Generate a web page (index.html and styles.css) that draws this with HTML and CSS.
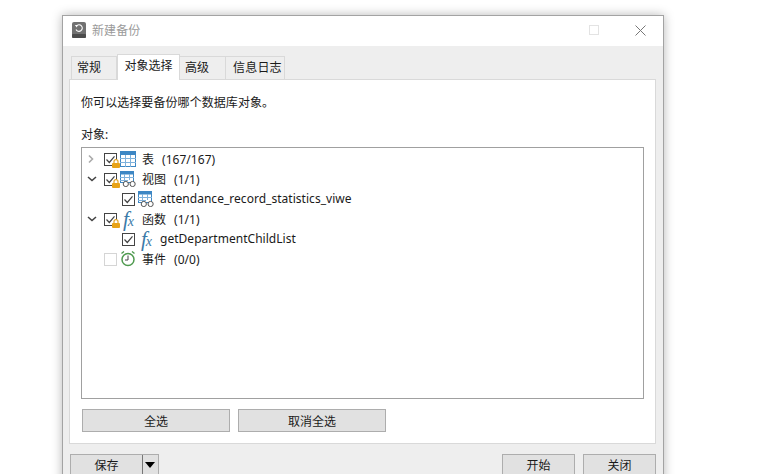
FILE: index.html
```html
<!DOCTYPE html>
<html lang="zh-CN">
<head>
    <meta charset="UTF-8">
    <title>新建备份</title>
    <link rel="stylesheet" href="styles.css">
</head>
<body>
    <svg class="defs" width="0" height="0">
        <defs>
            <symbol id="check" viewBox="0 0 13 13">
                <rect x="0.5" y="0.5" width="12" height="12" fill="#fff" stroke="#444"/>
                <path d="M2.5 6.5l2.8 3 5.2-6.2" fill="none" stroke="#444" stroke-width="1.2"/>
            </symbol>
            <symbol id="lock" viewBox="0 0 8 9">
                <path d="M2 4.500V2.600a2 2 0 0 1 4 0V4.500" fill="#fff" stroke="#e0a020" stroke-width="1.200"/>
                <rect x="0" y="4" width="8" height="5" rx="1" fill="#e8a317"/>
            </symbol>
            <symbol id="table" viewBox="0 0 16 16">
                <rect x="0.5" y="0.5" width="15" height="15" fill="#fff" stroke="#3d87c4"/>
                <rect x="0" y="0" width="16" height="4" fill="#3d87c4"/>
                <path d="M5.5 4v12M10.5 4v12M0 7.5h16M0 11.5h16" stroke="#7fb2dc"/>
            </symbol>
            <symbol id="view" viewBox="0 0 16 16">
                <rect x="0.5" y="0.5" width="13" height="11" fill="#fff" stroke="#3d87c4"/>
                <rect x="0" y="0" width="14" height="3.5" fill="#3d87c4"/>
                <path d="M4.500 3v8M9.500 3v6M0 6.500h14M0 9.500h8" stroke="#7fb2dc"/>
                <circle cx="5.800" cy="13" r="2.600" fill="#fff" stroke="#555"/>
                <circle cx="12.600" cy="13" r="2.600" fill="#fff" stroke="#555"/>
            </symbol>
            <symbol id="alarm" viewBox="0 0 16 16">
                <circle cx="8" cy="8.500" r="6" fill="#fff" stroke="#4f9a4f" stroke-width="1.500"/>
                <path d="M8 4.500v4.500h-3" fill="none" stroke="#444"/>
                <path d="M1.500 2.500l2.500-2M14.500 2.500l-2.500-2" stroke="#4f9a4f" stroke-width="1.400"/>
            </symbol>
        </defs>
    </svg>

    <div class="window">
        <div class="titlebar">
            <svg class="app-icon" viewBox="0 0 14 16" width="14" height="16">
                <rect width="14" height="16" rx="2" fill="#717171"/>
                <rect y="12" width="14" height="4" rx="1" fill="#4c4c4c"/>
                <path d="M4.400 4A3.300 3.300 0 1 1 4 7.400" fill="none" stroke="#fff" stroke-width="1.100"/>
                <path d="M2.900 2.900l2.900 .2-1 2.300z" fill="#fff"/>
            </svg>
            <span class="title">新建备份</span>
            <span class="win-max"></span>
            <svg class="win-close" viewBox="0 0 11 11" width="11" height="11">
                <path d="M.5.5l10 10M10.500.5l-10 10" stroke="#777" fill="none"/>
            </svg>
        </div>

        <div class="body">
            <div class="tabs">
                <div class="tab tab-1">常规</div>
                <div class="tab tab-2 active">对象选择</div>
                <div class="tab tab-3">高级</div>
                <div class="tab tab-4">信息日志</div>
            </div>

            <div class="panel">
                <p class="hint">你可以选择要备份哪个数据库对象。</p>
                <p class="label">对象:</p>

                <div class="tree">
                    <div class="row">
                        <svg class="arrow" viewBox="0 0 10 10" width="10" height="10"><path d="M2 1.500l3.500 3.500-3.500 3.500" fill="none" stroke="#aaa" stroke-width="1.600"/></svg>
                        <span class="check-wrap">
                            <svg class="check"><use href="#check"/></svg>
                            <svg class="lock"><use href="#lock"/></svg>
                        </span>
                        <svg class="icon"><use href="#table"/></svg>
                        <span class="name">表<span class="count">(167/167)</span></span>
                    </div>
                    <div class="row">
                        <svg class="arrow" viewBox="0 0 10 10" width="10" height="10"><path d="M1 3l4 3.500 4-3.500" fill="none" stroke="#444" stroke-width="1.600"/></svg>
                        <span class="check-wrap">
                            <svg class="check"><use href="#check"/></svg>
                            <svg class="lock"><use href="#lock"/></svg>
                        </span>
                        <svg class="icon"><use href="#view"/></svg>
                        <span class="name">视图<span class="count">(1/1)</span></span>
                    </div>
                    <div class="row child">
                        <span class="check-wrap"><svg class="check"><use href="#check"/></svg></span>
                        <svg class="icon"><use href="#view"/></svg>
                        <span class="name">attendance_record_statistics_viwe</span>
                    </div>
                    <div class="row">
                        <svg class="arrow" viewBox="0 0 10 10" width="10" height="10"><path d="M1 3l4 3.500 4-3.500" fill="none" stroke="#444" stroke-width="1.600"/></svg>
                        <span class="check-wrap">
                            <svg class="check"><use href="#check"/></svg>
                            <svg class="lock"><use href="#lock"/></svg>
                        </span>
                        <span class="icon fx"><span class="fx-f">f</span><span class="fx-x">x</span></span>
                        <span class="name">函数<span class="count">(1/1)</span></span>
                    </div>
                    <div class="row child">
                        <span class="check-wrap"><svg class="check"><use href="#check"/></svg></span>
                        <span class="icon fx"><span class="fx-f">f</span><span class="fx-x">x</span></span>
                        <span class="name">getDepartmentChildList</span>
                    </div>
                    <div class="row">
                        <span class="arrow-gap"></span>
                        <span class="check-wrap"><span class="check-off"></span></span>
                        <svg class="icon"><use href="#alarm"/></svg>
                        <span class="name">事件<span class="count">(0/0)</span></span>
                    </div>
                </div>

                <div class="select-btns">
                    <button class="btn select-btn">全选</button>
                    <button class="btn select-btn">取消全选</button>
                </div>
            </div>

            <div class="footer">
                <div class="btn save">
                    <span class="save-text">保存</span>
                    <span class="save-drop"></span>
                </div>
                <div class="footer-right">
                    <button class="btn foot-btn">开始</button>
                    <button class="btn foot-btn">关闭</button>
                </div>
            </div>
        </div>
    </div>
</body>
</html>
```

FILE: styles.css
```css
* {
    margin: 0;
    padding: 0;
    box-sizing: border-box;
}
html, body {
    height: 100%;
    overflow: hidden;
}
body {
    background-color: #fff;
    font-family: "Noto Sans", "Noto Sans CJK SC", sans-serif;
    font-size: 12px;
    color: #1a1a1a;
    padding: 15px 0 0 62px;
}
.defs {
    position: absolute;
}
.window {
    width: 602px;
    height: 480px;
    border: 1px solid #a3a3a3;
    box-shadow: 0 0 10px rgba(0, 0, 0, 0.28);
    background-color: #eee;
}
.titlebar {
    height: 30px;
    background-color: #fff;
    display: flex;
    align-items: center;
    padding: 0 0 2px 9px;
}
.app-icon {
    margin-right: 6px;
}
.title {
    color: #9a9a9a;
    flex: 1;
    letter-spacing: 0.1px;
}
.win-max {
    width: 10px;
    height: 10px;
    border: 1px solid #e3e3e3;
    margin-right: 36px;
}
.win-close {
    margin-right: 17px;
}
.body {
    padding: 8px 7px 0 6px;
}
.tabs {
    display: flex;
    height: 25px;
    align-items: flex-end;
    padding-left: 2px;
}
.tab {
    height: 23px;
    background-color: #eee;
    border: 1px solid #d9d9d9;
    border-bottom: none;
    border-left: none;
    line-height: 22px;
}
.tab-1 {
    width: 46px;
    border-left: 1px solid #d9d9d9;
    padding-left: 5px;
}
.tab-2 {
    width: 63px;
    text-align: center;
}
.tab-3 {
    width: 46px;
    padding-left: 5px;
}
.tab-4 {
    width: 59px;
    padding-left: 7px;
    letter-spacing: 0.2px;
}
.tab.active {
    height: 26px;
    background-color: #fff;
    border-left: 1px solid #d9d9d9;
    margin-bottom: -1px;
    position: relative;
    z-index: 1;
    line-height: 22px;
}
.panel {
    height: 365px;
    background-color: #fff;
    border: 1px solid #d9d9d9;
    padding: 14px 11px 0 11px;
}
.hint {
    height: 18px;
    line-height: 18px;
    letter-spacing: 0.07px;
}
.label {
    height: 18px;
    line-height: 18px;
    margin-top: 14px;
}
.tree {
    height: 252px;
    margin-top: 3px;
    border: 1px solid #a0a0a0;
    padding-top: 1px;
}
.row {
    height: 20px;
    display: flex;
    align-items: center;
    padding-left: 5px;
}
.row.child {
    padding-left: 40px;
}
.arrow {
    margin-right: 7px;
    flex: none;
}
.arrow-gap {
    width: 17px;
}
.check-wrap {
    width: 14px;
    height: 14px;
    position: relative;
    margin-right: 2px;
    flex: none;
}
.check {
    width: 13px;
    height: 13px;
    display: block;
    margin-top: 1px;
}
.check-off {
    display: block;
    width: 13px;
    height: 13px;
    margin-top: 1px;
    border: 1px solid #d5d5d5;
    background-color: #fff;
}
.lock {
    position: absolute;
    left: 8px;
    top: 7px;
    width: 8px;
    height: 9px;
}
.icon {
    width: 16px;
    height: 16px;
    margin-right: 6px;
    flex: none;
}
.fx {
    display: flex;
    font-family: "Liberation Serif", serif;
    font-style: italic;
    color: #3a7aa8;
    line-height: 16px;
    padding-left: 3px;
}
.fx-f {
    font-size: 21px;
}
.fx-x {
    font-size: 14px;
    margin: 3px 0 0 -1px;
}
.name {
    padding-bottom: 1px;
    letter-spacing: 0.03px;
}
.count {
    margin-left: 8px;
}
.select-btns {
    display: flex;
    gap: 8px;
    margin-top: 10px;
    padding-left: 1px;
}
.btn {
    background-color: #e1e1e1;
    border: 1px solid #adadad;
    font-family: inherit;
    font-size: 12px;
    color: #1a1a1a;
}
.select-btn {
    width: 148px;
    height: 23px;
}
.footer {
    display: flex;
    justify-content: space-between;
    margin-top: 10px;
    padding-left: 1px;
}
.save {
    width: 89px;
    height: 30px;
    display: flex;
}
.save-text {
    width: 72px;
    text-align: center;
    line-height: 21px;
    border-right: 1px solid #777;
}
.save-drop {
    margin: 7px 0 0 2px;
    width: 0;
    height: 0;
    border-left: 5.5px solid transparent;
    border-right: 5.5px solid transparent;
    border-top: 6px solid #000;
}
.footer-right {
    display: flex;
    gap: 8px;
}
.foot-btn {
    width: 73px;
    height: 30px;
    padding-bottom: 8px;
}
```
